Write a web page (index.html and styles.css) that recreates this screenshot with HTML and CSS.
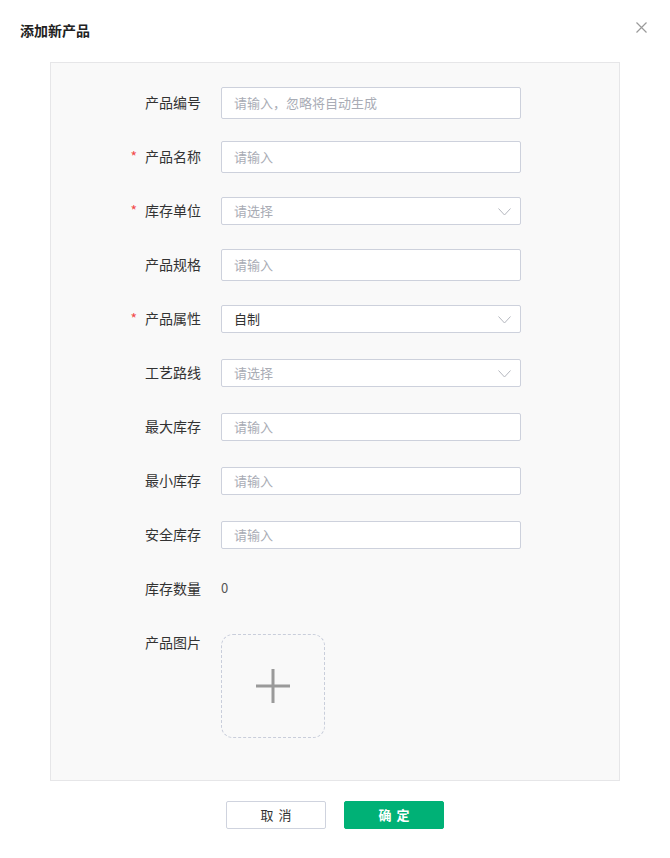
FILE: index.html
```html
<!DOCTYPE HTML>
<html>
<head>
    <meta charset="utf-8">
    <title>添加新产品</title>
    <link rel="stylesheet" href="styles.css">
</head>

<body>
    <div class="dialog">
        <div class="dialog-header">
            <span class="dialog-title">添加新产品</span>
            <svg class="close" width="11" height="11" viewBox="0 0 11 11">
                <path d="M0.5 0.5 L10.5 10.5 M10.5 0.5 L0.5 10.5" stroke="#9a9a9a" stroke-width="1.2" fill="none"/>
            </svg>
        </div>

        <div class="form-panel">
            <div class="form-row">
                <label class="form-label">产品编号</label>
                <div class="input"><span class="placeholder">请输入，忽略将自动生成</span></div>
            </div>
            <div class="form-row">
                <label class="form-label"><span class="req">*</span>产品名称</label>
                <div class="input"><span class="placeholder">请输入</span></div>
            </div>
            <div class="form-row">
                <label class="form-label"><span class="req">*</span>库存单位</label>
                <div class="input sm select"><span class="placeholder">请选择</span>
                    <svg class="arrow" width="13" height="8" viewBox="0 0 13 8"><path d="M0.5 0.5 L6.5 7 L12.5 0.5" stroke="#b4b7bf" stroke-width="1" fill="none"/></svg>
                </div>
            </div>
            <div class="form-row">
                <label class="form-label">产品规格</label>
                <div class="input"><span class="placeholder">请输入</span></div>
            </div>
            <div class="form-row">
                <label class="form-label"><span class="req">*</span>产品属性</label>
                <div class="input sm select"><span class="value">自制</span>
                    <svg class="arrow" width="13" height="8" viewBox="0 0 13 8"><path d="M0.5 0.5 L6.5 7 L12.5 0.5" stroke="#b4b7bf" stroke-width="1" fill="none"/></svg>
                </div>
            </div>
            <div class="form-row">
                <label class="form-label">工艺路线</label>
                <div class="input sm select"><span class="placeholder">请选择</span>
                    <svg class="arrow" width="13" height="8" viewBox="0 0 13 8"><path d="M0.5 0.5 L6.5 7 L12.5 0.5" stroke="#b4b7bf" stroke-width="1" fill="none"/></svg>
                </div>
            </div>
            <div class="form-row">
                <label class="form-label">最大库存</label>
                <div class="input sm"><span class="placeholder">请输入</span></div>
            </div>
            <div class="form-row">
                <label class="form-label">最小库存</label>
                <div class="input sm"><span class="placeholder">请输入</span></div>
            </div>
            <div class="form-row">
                <label class="form-label">安全库存</label>
                <div class="input sm"><span class="placeholder">请输入</span></div>
            </div>
            <div class="form-row">
                <label class="form-label">库存数量</label>
                <span class="static">0</span>
            </div>
            <div class="form-row top">
                <label class="form-label">产品图片</label>
                <div class="upload">
                    <svg width="34" height="34" viewBox="0 0 34 34">
                        <path d="M17 0 V34 M0 17 H34" stroke="#9a9a9a" stroke-width="3" fill="none"/>
                    </svg>
                </div>
            </div>
        </div>

        <div class="dialog-footer">
            <button class="btn">取消</button>
            <button class="btn primary">确定</button>
        </div>
    </div>
</body>
</html>
```

FILE: styles.css
```css
html, body{
    margin: 0;
    background: #fff;
}
body{
    font-family: "Noto Sans CJK SC", "Noto Sans", sans-serif;
    font-size: 14px;
    color: #333;
}
.dialog{
    width: 670px;
}
.dialog-header{
    height: 62px;
    display: flex;
    align-items: center;
    justify-content: space-between;
    padding: 0 23px 0 20px;
    box-sizing: border-box;
}
.dialog-title{
    font-size: 14px;
    font-weight: 600;
    color: #222;
    margin-top: -2px;
}
.close{
    margin-top: -8px;
}
.form-panel{
    margin: 0 50px;
    background-color: #f9f9f9;
    border: 1px solid #e6e6e8;
    padding: 24px 0 42px;
}
.form-row{
    display: flex;
    align-items: center;
    min-height: 32px;
    margin-bottom: 22px;
}
.form-row:last-child{
    margin-bottom: 0;
}
.form-row.top{
    align-items: flex-start;
}
.form-label{
    width: 150px;
    flex: none;
    text-align: right;
    line-height: 30px;
    padding-bottom: 2px;
    margin-right: 20px;
    color: #333;
}
.req{
    color: #f24b4b;
    margin-right: 8px;
    font-size: 14px;
}
.input{
    width: 300px;
    height: 32px;
    box-sizing: border-box;
    border: 1px solid #cdd1dc;
    border-radius: 2px;
    background: #fff;
    display: flex;
    align-items: center;
    padding: 0 9px 2px 12px;
    font-size: 13px;
}
.input.sm{
    height: 28px;
}
.select{
    justify-content: space-between;
}
.placeholder{
    color: #a9acb5;
}
.value{
    color: #333;
}
.arrow{
    margin-top: 3px;
}
.static{
    font-size: 13px;
    color: #555;
    padding-bottom: 3px;
}
.upload{
    margin-top: 7px;
    width: 104px;
    height: 104px;
    box-sizing: border-box;
    border: 1px dashed #c9cedb;
    border-radius: 12px;
    display: flex;
    align-items: center;
    justify-content: center;
}
.dialog-footer{
    display: flex;
    justify-content: center;
    gap: 18px;
    padding-top: 20px;
}
.btn{
    width: 100px;
    height: 28px;
    font-family: "Noto Sans CJK SC", sans-serif;
    font-size: 13px;
    letter-spacing: 5px;
    text-indent: 5px;
    border: 1px solid #cfd3de;
    border-radius: 2px;
    background: #fff;
    color: #333;
    padding: 0 0 1px;
}
.btn.primary{
    background: #00b176;
    border-color: #00b176;
    color: #fff;
    font-weight: 600;
}
```
